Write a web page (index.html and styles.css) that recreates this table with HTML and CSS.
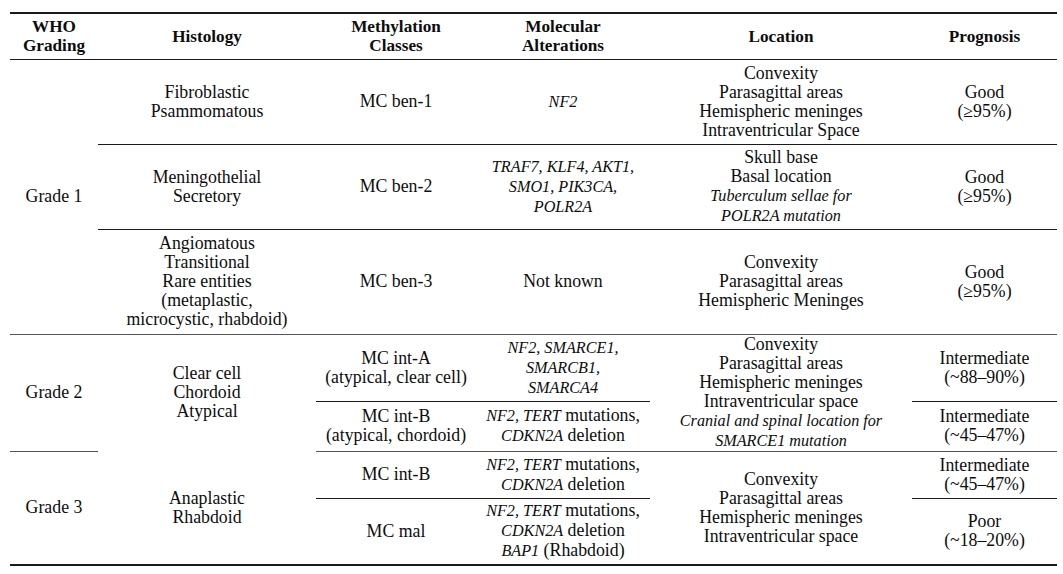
FILE: index.html
```html
<!DOCTYPE html>
<html>
<head>
<meta charset="utf-8">
<link rel="stylesheet" href="styles.css">
</head>
<body>
<table class="tbl">
  <colgroup>
    <col class="c-who"><col class="c-hist"><col class="c-meth"><col class="c-mol"><col class="c-loc"><col class="c-prog">
  </colgroup>
  <thead>
    <tr class="r-head">
      <th>WHO<br>Grading</th>
      <th>Histology</th>
      <th>Methylation<br>Classes</th>
      <th>Molecular<br>Alterations</th>
      <th>Location</th>
      <th>Prognosis</th>
    </tr>
  </thead>
  <tbody>
    <tr class="r-85">
      <td rowspan="3" class="grade">Grade 1</td>
      <td class="b">Fibroblastic<br>Psammomatous</td>
      <td class="b">MC ben-1</td>
      <td class="b"><i>NF2</i></td>
      <td class="b">Convexity<br>Parasagittal areas<br>Hemispheric meninges<br>Intraventricular Space</td>
      <td class="b">Good<br>(≥95%)</td>
    </tr>
    <tr class="r-85">
      <td class="b">Meningothelial<br>Secretory</td>
      <td class="b">MC ben-2</td>
      <td class="b"><i>TRAF7, KLF4, AKT1,<br>SMO1, PIK3CA,<br>POLR2A</i></td>
      <td class="b">Skull base<br>Basal location<br><i>Tuberculum sellae for<br>POLR2A mutation</i></td>
      <td class="b">Good<br>(≥95%)</td>
    </tr>
    <tr class="r-105 grp-end">
      <td>Angiomatous<br>Transitional<br>Rare entities<br>(metaplastic,<br>microcystic, rhabdoid)</td>
      <td>MC ben-3</td>
      <td>Not known</td>
      <td>Convexity<br>Parasagittal areas<br>Hemispheric Meninges</td>
      <td>Good<br>(≥95%)</td>
    </tr>
    <tr class="r-66">
      <td rowspan="2" class="grade">Grade 2</td>
      <td rowspan="2">Clear cell<br>Chordoid<br>Atypical</td>
      <td class="b">MC int-A<br>(atypical, clear cell)</td>
      <td class="b"><i>NF2, SMARCE1,<br>SMARCB1,<br>SMARCA4</i></td>
      <td rowspan="2" class="loc2">Convexity<br>Parasagittal areas<br>Hemispheric meninges<br>Intraventricular space<br><i>Cranial and spinal location for<br>SMARCE1 mutation</i></td>
      <td class="b">Intermediate<br>(~88–90%)</td>
    </tr>
    <tr class="r-48 grp-end">
      <td>MC int-B<br>(atypical, chordoid)</td>
      <td><i>NF2, TERT</i> mutations,<br><i>CDKN2A</i> deletion</td>
      <td>Intermediate<br>(~45–47%)</td>
    </tr>
    <tr class="r-47">
      <td rowspan="2" class="grade">Grade 3</td>
      <td rowspan="2">Anaplastic<br>Rhabdoid</td>
      <td class="b">MC int-B</td>
      <td class="b"><i>NF2, TERT</i> mutations,<br><i>CDKN2A</i> deletion</td>
      <td rowspan="2">Convexity<br>Parasagittal areas<br>Hemispheric meninges<br>Intraventricular space</td>
      <td class="b">Intermediate<br>(~45–47%)</td>
    </tr>
    <tr class="r-67 last">
      <td>MC mal</td>
      <td><i>NF2, TERT</i> mutations,<br><i>CDKN2A</i> deletion<br><i>BAP1</i> (Rhabdoid)</td>
      <td>Poor<br>(~18–20%)</td>
    </tr>
  </tbody>
</table>
</body>
</html>
```

FILE: styles.css
```css
html, body {
  margin: 0;
  padding: 0;
  background: #ffffff;
}

body {
  padding: 12px 0 0 10px;
  font-family: "Liberation Serif", "Times New Roman", serif;
  font-size: 17.8px;
  line-height: 19px;
  color: #0d0d0d;
}

.tbl {
  border-collapse: collapse;
  table-layout: fixed;
  width: 1047px;
}

.c-who { width: 88px; }
.c-hist { width: 218px; }
.c-meth { width: 160px; }
.c-mol { width: 174px; }
.c-loc { width: 262px; }
.c-prog { width: 145px; }

.tbl th,
.tbl td {
  padding: 0;
  text-align: center;
  vertical-align: middle;
  white-space: nowrap;
}

.tbl th {
  font-size: 17.2px;
  font-weight: bold;
  border-top: 2px solid #1a1a1a;
  border-bottom: 1px solid #1a1a1a;
}

.tbl i {
  font-size: 16.2px;
}

.r-head { height: 46px; }
.r-85 { height: 85px; }
.r-105 { height: 105px; }
.r-66 { height: 66px; }
.r-48 { height: 48px; }
.r-47 { height: 47px; }
.r-67 { height: 67px; }

.tbl td.b {
  border-bottom: 1px solid #1a1a1a;
}

.grp-end td,
.tbl td.grade,
.tbl td.loc2 {
  border-bottom: 1.5px solid #555555;
}

.last td,
.r-47 td[rowspan] {
  border-bottom: 2px solid #1a1a1a;
}
```
